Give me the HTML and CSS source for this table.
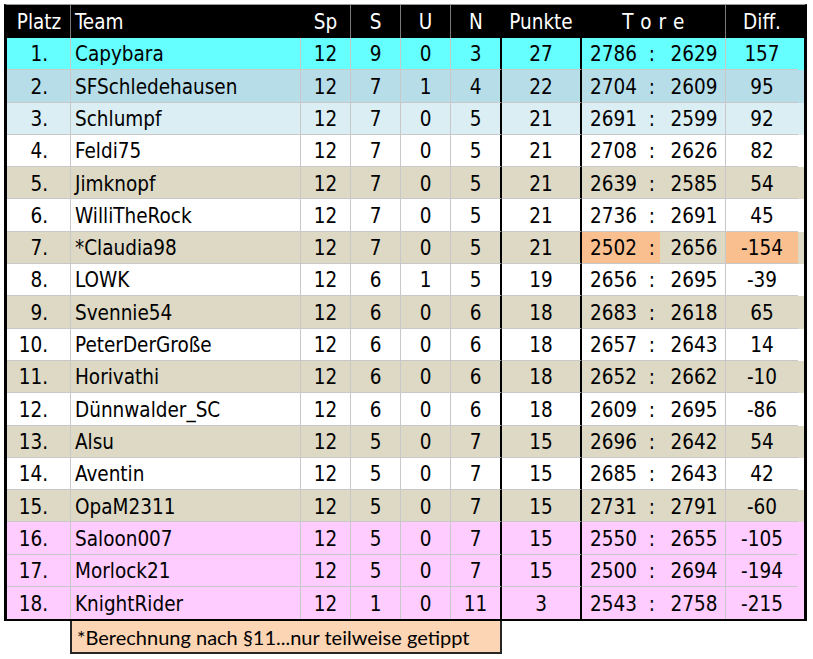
FILE: index.html
```html
<!DOCTYPE html>
<html lang="de">
<head>
<meta charset="utf-8">
<title>Tabelle</title>
<link rel="stylesheet" href="styles.css">
</head>
<body>
<div class="page">
  <div class="table">
    <div class="row head">
      <div class="c platz hd">Platz</div>
      <div class="c team nodiv">Team</div>
      <div class="c num">Sp</div>
      <div class="c num">S</div>
      <div class="c num">U</div>
      <div class="c num nodiv">N</div>
      <div class="c pts nodiv">Punkte</div>
      <div class="c tore-h">T o r e</div>
      <div class="c diff">Diff.</div>
    </div>

    <div class="row r-cyan"><div class="c platz">1.</div><div class="c team">Capybara</div><div class="c num">12</div><div class="c num">9</div><div class="c num">0</div><div class="c num n">3</div><div class="c pts">27</div><div class="c tore"><span class="tl"><span>2786</span><span>:</span></span><span class="tr">2629</span></div><div class="c diff">157</div></div>
    <div class="row r-blue"><div class="c platz">2.</div><div class="c team">SFSchledehausen</div><div class="c num">12</div><div class="c num">7</div><div class="c num">1</div><div class="c num n">4</div><div class="c pts">22</div><div class="c tore"><span class="tl"><span>2704</span><span>:</span></span><span class="tr">2609</span></div><div class="c diff">95</div></div>
    <div class="row r-lblue"><div class="c platz">3.</div><div class="c team">Schlumpf</div><div class="c num">12</div><div class="c num">7</div><div class="c num">0</div><div class="c num n">5</div><div class="c pts">21</div><div class="c tore"><span class="tl"><span>2691</span><span>:</span></span><span class="tr">2599</span></div><div class="c diff">92</div></div>
    <div class="row r-white"><div class="c platz">4.</div><div class="c team">Feldi75</div><div class="c num">12</div><div class="c num">7</div><div class="c num">0</div><div class="c num n">5</div><div class="c pts">21</div><div class="c tore"><span class="tl"><span>2708</span><span>:</span></span><span class="tr">2626</span></div><div class="c diff">82</div></div>
    <div class="row r-tan"><div class="c platz">5.</div><div class="c team">Jimknopf</div><div class="c num">12</div><div class="c num">7</div><div class="c num">0</div><div class="c num n">5</div><div class="c pts">21</div><div class="c tore"><span class="tl"><span>2639</span><span>:</span></span><span class="tr">2585</span></div><div class="c diff">54</div></div>
    <div class="row r-white"><div class="c platz">6.</div><div class="c team">WilliTheRock</div><div class="c num">12</div><div class="c num">7</div><div class="c num">0</div><div class="c num n">5</div><div class="c pts">21</div><div class="c tore"><span class="tl"><span>2736</span><span>:</span></span><span class="tr">2691</span></div><div class="c diff">45</div></div>
    <div class="row r-tan"><div class="c platz">7.</div><div class="c team">*Claudia98</div><div class="c num">12</div><div class="c num">7</div><div class="c num">0</div><div class="c num n">5</div><div class="c pts">21</div><div class="c tore"><span class="tl hl"><span>2502</span><span>:</span></span><span class="tr">2656</span></div><div class="c diff hl">-154</div></div>
    <div class="row r-white"><div class="c platz">8.</div><div class="c team">LOWK</div><div class="c num">12</div><div class="c num">6</div><div class="c num">1</div><div class="c num n">5</div><div class="c pts">19</div><div class="c tore"><span class="tl"><span>2656</span><span>:</span></span><span class="tr">2695</span></div><div class="c diff">-39</div></div>
    <div class="row r-tan"><div class="c platz">9.</div><div class="c team">Svennie54</div><div class="c num">12</div><div class="c num">6</div><div class="c num">0</div><div class="c num n">6</div><div class="c pts">18</div><div class="c tore"><span class="tl"><span>2683</span><span>:</span></span><span class="tr">2618</span></div><div class="c diff">65</div></div>
    <div class="row r-white"><div class="c platz">10.</div><div class="c team">PeterDerGroße</div><div class="c num">12</div><div class="c num">6</div><div class="c num">0</div><div class="c num n">6</div><div class="c pts">18</div><div class="c tore"><span class="tl"><span>2657</span><span>:</span></span><span class="tr">2643</span></div><div class="c diff">14</div></div>
    <div class="row r-tan"><div class="c platz">11.</div><div class="c team">Horivathi</div><div class="c num">12</div><div class="c num">6</div><div class="c num">0</div><div class="c num n">6</div><div class="c pts">18</div><div class="c tore"><span class="tl"><span>2652</span><span>:</span></span><span class="tr">2662</span></div><div class="c diff">-10</div></div>
    <div class="row r-white"><div class="c platz">12.</div><div class="c team">Dünnwalder_SC</div><div class="c num">12</div><div class="c num">6</div><div class="c num">0</div><div class="c num n">6</div><div class="c pts">18</div><div class="c tore"><span class="tl"><span>2609</span><span>:</span></span><span class="tr">2695</span></div><div class="c diff">-86</div></div>
    <div class="row r-tan"><div class="c platz">13.</div><div class="c team">Alsu</div><div class="c num">12</div><div class="c num">5</div><div class="c num">0</div><div class="c num n">7</div><div class="c pts">15</div><div class="c tore"><span class="tl"><span>2696</span><span>:</span></span><span class="tr">2642</span></div><div class="c diff">54</div></div>
    <div class="row r-white"><div class="c platz">14.</div><div class="c team">Aventin</div><div class="c num">12</div><div class="c num">5</div><div class="c num">0</div><div class="c num n">7</div><div class="c pts">15</div><div class="c tore"><span class="tl"><span>2685</span><span>:</span></span><span class="tr">2643</span></div><div class="c diff">42</div></div>
    <div class="row r-tan"><div class="c platz">15.</div><div class="c team">OpaM2311</div><div class="c num">12</div><div class="c num">5</div><div class="c num">0</div><div class="c num n">7</div><div class="c pts">15</div><div class="c tore"><span class="tl"><span>2731</span><span>:</span></span><span class="tr">2791</span></div><div class="c diff">-60</div></div>
    <div class="row r-pink"><div class="c platz">16.</div><div class="c team">Saloon007</div><div class="c num">12</div><div class="c num">5</div><div class="c num">0</div><div class="c num n">7</div><div class="c pts">15</div><div class="c tore"><span class="tl"><span>2550</span><span>:</span></span><span class="tr">2655</span></div><div class="c diff">-105</div></div>
    <div class="row r-pink"><div class="c platz">17.</div><div class="c team">Morlock21</div><div class="c num">12</div><div class="c num">5</div><div class="c num">0</div><div class="c num n">7</div><div class="c pts">15</div><div class="c tore"><span class="tl"><span>2500</span><span>:</span></span><span class="tr">2694</span></div><div class="c diff">-194</div></div>
    <div class="row r-pink last"><div class="c platz">18.</div><div class="c team">KnightRider</div><div class="c num">12</div><div class="c num">1</div><div class="c num">0</div><div class="c num n">11</div><div class="c pts">3</div><div class="c tore"><span class="tl"><span>2543</span><span>:</span></span><span class="tr">2758</span></div><div class="c diff">-215</div></div>
  </div>
  <div class="note">*Berechnung nach §11...nur teilweise getippt</div>
</div>
</body>
</html>
```
FILE: styles.css
```css
* { box-sizing: border-box; }
html, body { margin: 0; padding: 0; background: #fff; }
body {
  font-family: "DejaVu Sans Condensed", "DejaVu Sans", sans-serif;
  font-stretch: condensed;
  font-size: 20.5px;
  color: #000;
}
.page { padding: 4px 0 0 4px; }
.table {
  width: 803px;
  border-left: 3px solid #000;
  border-right: 3px solid #000;
  border-bottom: 2px solid #000;
  border-top: 1px solid #9a9a9a;
}
.row {
  display: grid;
  grid-template-columns: 64px 230px 50px 50px 50px 51px 80px 144px 72px;
  height: 32.3px;
}
.c {
  border-right: 1px solid #c8c8c8;
  border-bottom: 1px solid #c8c8c8;
  display: flex;
  align-items: center;
  justify-content: center;
  white-space: nowrap;
  line-height: 1;
  padding-top: 2px;
}
.row.last .c { border-bottom: none; }
.c.diff { border-right: none; }
.c.n { border-right: 2px solid #000; }
.c.pts { border-right: 2px solid #000; }
.platz { justify-content: flex-end; padding-right: 22px; }
.team { justify-content: flex-start; padding-left: 4px; }

.head { height: 33px; background: #000; color: #fff; }
.head .c { border-bottom: none; border-right: 1px solid #7a7a7a; padding-top: 1px; }
.head .c.nodiv { border-right: 1px solid #000; }
.head .c.pts { border-right: 2px solid #000; }
.head .c.n { border-right: 2px solid #000; }
.head .c.diff { border-right: none; }
.head .platz { justify-content: center; padding-right: 0; padding-left: 1px; }
.head .tore-h { letter-spacing: 0.5px; }

.tore { display: grid; grid-template-columns: 78px 1fr; padding: 0; align-items: stretch; }
.tl { display: flex; align-items: center; justify-content: space-between; padding: 2px 5px 0 8px; }
.tr { display: flex; align-items: center; justify-content: center; padding: 2px 0 0 3px; }
.hl { background: #fabf8f; }

.r-cyan { background: #66ffff; }
.r-blue { background: #b7dde8; }
.r-lblue { background: #dbeef3; }
.r-white { background: #ffffff; }
.r-tan { background: #ddd9c4; }
.r-pink { background: #ffccff; }

.note {
  margin-left: 66px;
  width: 432px;
  height: 33px;
  background: #fcd5b4;
  border: 2px solid #262626;
  border-top: none;
  font-family: "Lato", "Open Sans", sans-serif;
  font-stretch: normal;
  font-size: 20px;
  padding-left: 5px;
  display: flex;
  align-items: center;
}
```
